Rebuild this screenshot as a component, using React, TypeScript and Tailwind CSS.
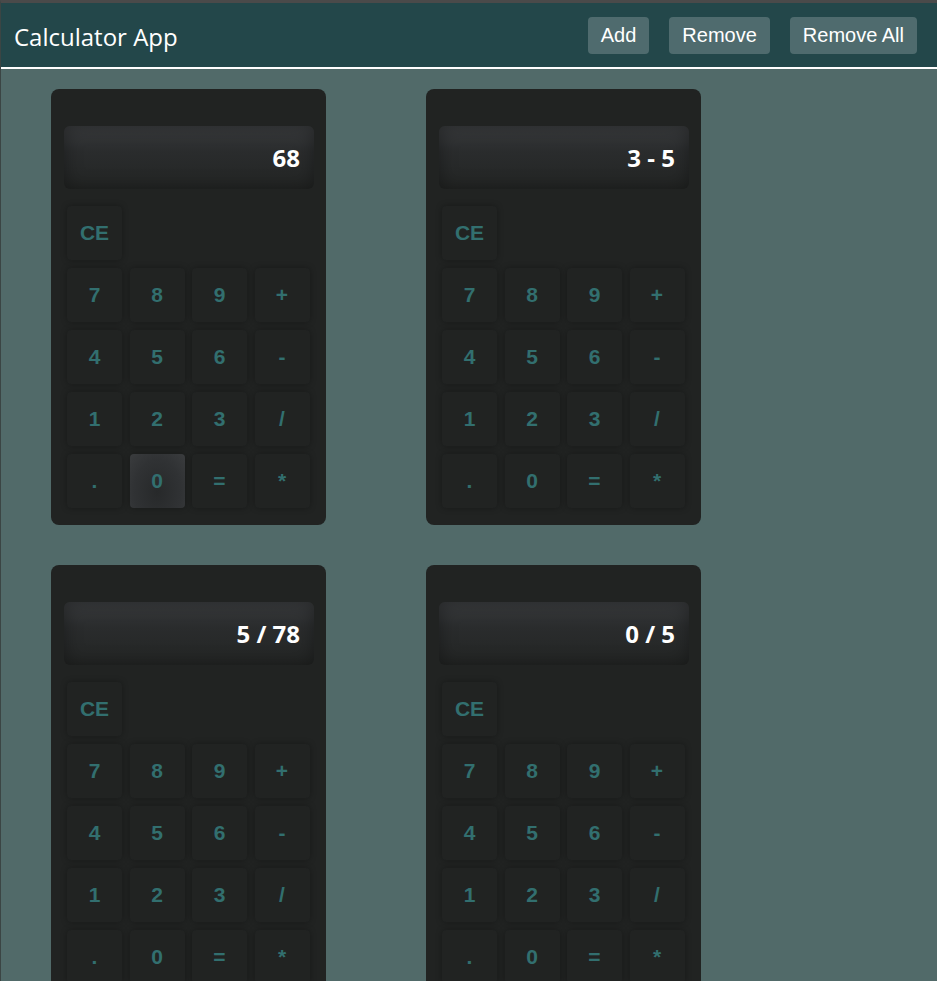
import React from "react";

const rows: string[][] = [
  ["7", "8", "9", "+"],
  ["4", "5", "6", "-"],
  ["1", "2", "3", "/"],
  [".", "0", "=", "*"],
];

function Key({ label, active }: { label: string; active?: boolean }) {
  return (
    <div
      className={
        "w-[55px] h-[54px] rounded-[4px] flex items-center justify-center text-[21px] font-bold text-[#326f6f] shadow-[0_0_6px_rgba(0,0,0,0.3)] " +
        (active
          ? "bg-[radial-gradient(ellipse_at_50%_70%,#27292a_0%,#303234_60%,#3a3c3e_100%)]"
          : "bg-[#212322]")
      }
      style={{ fontFamily: '"Liberation Sans", Arial, sans-serif' }}
    >
      {label}
    </div>
  );
}

function Calculator({ value, activeZero }: { value: string; activeZero?: boolean }) {
  return (
    <div className="m-[20px_50px] w-[275px] h-[436px] shrink-0 rounded-[8px] bg-[#212322] px-[13px] pt-[37px] pb-[15px] flex flex-col">
      <div
        className="h-[63px] w-[250px] rounded-[6px] flex items-center justify-end pr-[14px] text-white font-bold text-[24px] bg-[linear-gradient(to_bottom,#393b3d_0%,#2a2c2d_40%,#232524_100%)] shadow-[inset_0_0_18px_rgba(0,0,0,0.35)]"
        style={{ fontFamily: '"Open Sans", "Noto Sans", sans-serif' }}
      >
        {value}
      </div>
      <div className="mt-[17px] ml-[3px] flex flex-col gap-[8px]">
        <div className="flex">
          <Key label="CE" />
        </div>
        {rows.map((r, i) => (
          <div key={i} className="flex gap-[7.5px]">
            {r.map((k) => (
              <Key key={k} label={k} active={activeZero && k === "0"} />
            ))}
          </div>
        ))}
      </div>
    </div>
  );
}

export default function App() {
  return (
    <div className="min-h-[981px] w-[937px] bg-[#516a69] border-t-[3px] border-t-[#4a4a4a] border-l border-l-[#3b4544] overflow-hidden">
      <header className="h-[66px] bg-[#23474a] border-b-2 border-b-white flex items-center justify-between pl-[13px] pr-[20px]">
        <h1
          className="text-white text-[24px] leading-none pt-[3px]"
          style={{ fontFamily: '"Segoe UI", "Open Sans", "Noto Sans", sans-serif' }}
        >
          Calculator App
        </h1>
        <div className="flex gap-[20px] items-center">
          {["Add", "Remove", "Remove All"].map((b) => (
            <button
              key={b}
              className="h-[37px] px-[13px] rounded-[4px] bg-[rgba(255,255,255,0.2)] text-white text-[20px]"
              style={{ fontFamily: '"Liberation Sans", Arial, sans-serif' }}
            >
              {b}
            </button>
          ))}
        </div>
      </header>
      <main className="flex flex-wrap">
        <Calculator value="68" activeZero />
        <Calculator value="3 - 5" />
        <Calculator value="5 / 78" />
        <Calculator value="0 / 5" />
      </main>
    </div>
  );
}
